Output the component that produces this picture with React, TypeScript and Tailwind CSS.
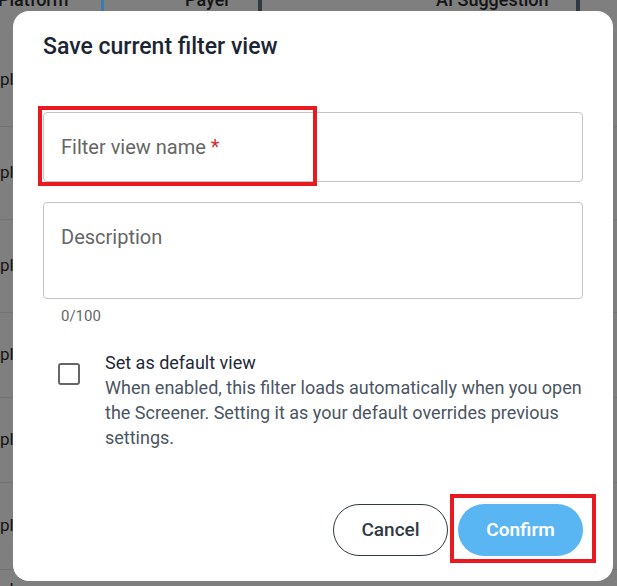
const rows = [
  { h: 'h-[93px]' },
  { h: 'h-[93px]' },
  { h: 'h-[93px]' },
  { h: 'h-[85px]' },
  { h: 'h-[85px]' },
  { h: 'h-[87px]' },
  { h: 'h-[40px]' },
]

function BackgroundTable() {
  return (
    <div className="w-full">
      {/* header, mostly scrolled out of view */}
      <div className="relative flex h-[34px] items-start text-[18px] font-medium text-[#141414]">
        <div className="-mt-[14px] flex w-full items-center">
          <span className="-ml-[2px] w-[103px] leading-[24px]">Platform</span>
          <span className="mt-[10px] h-[18px] w-[3px] rounded-full bg-[#3b7bb2]" />
          <span className="w-[154px] pl-[81px] leading-[24px]">Payer</span>
          <span className="mt-[10px] h-[18px] w-[4px] rounded-full bg-[#2e3a44]" />
          <span className="w-[314px] pl-[174px] leading-[24px] whitespace-nowrap">AI Suggestion</span>
          <span className="mt-[10px] h-[18px] w-[4px] rounded-full bg-[#2e3a44]" />
        </div>
      </div>
      {rows.map((r, i) => (
        <div
          key={i}
          className={`flex items-center border-b border-[#747474] ${r.h} text-[17px] text-[#141414]`}
        >
          <span>plan</span>
        </div>
      ))}
    </div>
  )
}

export default function App() {
  return (
    <div
      className="relative h-[586px] w-[617px] overflow-hidden bg-[#7f7f7f]"
      style={{ fontFamily: 'Roboto, "Liberation Sans", sans-serif' }}
    >
      <BackgroundTable />

      {/* Dialog */}
      <div className="absolute left-[13px] top-[11px] flex h-[570px] w-[600px] flex-col rounded-[16px] bg-white px-[30px] pb-[25px] pt-[22px]">
        <h2 className="text-[23px] font-medium leading-[28px] text-[#1b2533]">Save current filter view</h2>

        <div className="mt-[51px] flex h-[70px] items-center rounded-[4px] border border-[#c4c4c4] px-[17px]">
          <span className="text-[20px] leading-[24px] text-[#666666]">
            Filter view name <span className="text-[#d32f2f]">*</span>
          </span>
        </div>

        <div className="mt-[20px] h-[97px] rounded-[4px] border border-[#c4c4c4] px-[17px] pt-[22px]">
          <span className="text-[20px] leading-[24px] text-[#666666]">Description</span>
        </div>
        <div className="mt-[7px] pl-[18px] text-[15px] leading-[20px] text-[#666666]">0/100</div>

        <div className="mt-[24px] flex items-start">
          <div className="ml-[15px] mt-[13px] h-[22px] w-[22px] shrink-0 rounded-[3px] border-2 border-[#666666]" />
          <div className="ml-[25px] w-[480px] text-[18px] leading-[25px]">
            <div className="text-[#1f2937]">Set as default view</div>
            <div className="text-[#4b5563]">
              When enabled, this filter loads automatically when you open the Screener. Setting it as your default
              overrides previous settings.
            </div>
          </div>
        </div>

        <div className="flex-1" />

        <div className="flex justify-end gap-[10px]">
          <button className="h-[52px] w-[115px] rounded-full border border-[#2f3a45] text-[19px] font-medium text-[#2f3a45]">
            Cancel
          </button>
          <button className="h-[52px] w-[125px] rounded-full bg-[#5ab6f2] text-[19px] font-semibold text-white">
            Confirm
          </button>
        </div>
      </div>

      {/* annotation boxes */}
      <div className="absolute left-[38px] top-[106px] h-[80px] w-[279px] border-4 border-[#e8191f]" />
      <div className="absolute left-[450px] top-[494px] h-[69px] w-[146px] border-4 border-[#e8191f]" />
    </div>
  )
}
